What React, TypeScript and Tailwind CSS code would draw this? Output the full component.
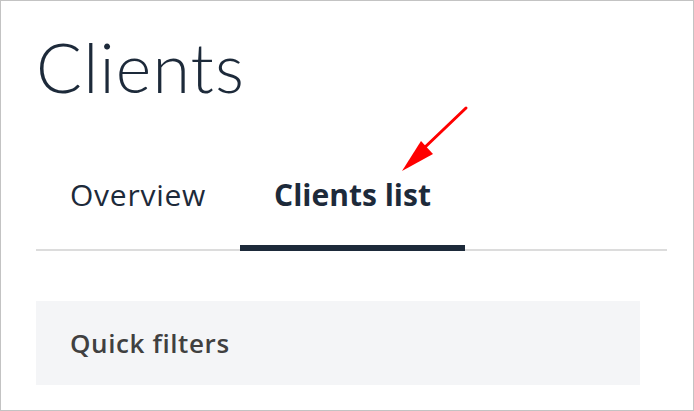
import React from "react";

const tabs = [
  { label: "Overview", active: false },
  { label: "Clients list", active: true },
];

const Arrow = () => (
  <svg
    className="absolute left-[396px] top-[100px]"
    width="76"
    height="76"
    viewBox="0 0 76 76"
    fill="none"
  >
    <line x1="69" y1="7" x2="25" y2="49" stroke="#ff0000" strokeWidth="3" strokeLinecap="round" />
    <polygon points="5,70 24,40 36,53" fill="#ff0000" />
  </svg>
);

export default function App() {
  return (
    <div className="relative w-[694px] h-[411px] overflow-hidden border border-[#c3c3c3] bg-white">
      <div className="pl-[35px] pr-[26px]">
        {/* Page title */}
        <h1 className="pt-[32px] font-['Lato',sans-serif] font-light text-[68px] leading-none text-[#1d2a3a] tracking-[1.2px]">
          Clients
        </h1>

        {/* Tabs */}
        <div className="mt-[79px] flex border-b-2 border-[#dcdcdc]">
          {tabs.map((tab) => (
            <div
              key={tab.label}
              className={
                tab.active
                  ? "relative px-[34px] pb-[39px] font-['Open_Sans',sans-serif] font-bold text-[30px] leading-none text-[#1d2a3a]"
                  : "relative px-[34px] pb-[39px] font-['Open_Sans',sans-serif] font-normal text-[30px] leading-none text-[#1d2a3a] tracking-[0.75px]"
              }
            >
              {tab.label}
              {tab.active && (
                <span className="absolute left-0 right-0 -bottom-[2px] h-[6px] bg-[#1d2a3a]" />
              )}
            </div>
          ))}
        </div>

        {/* Quick filters */}
        <div className="mt-[50px] w-[604px] h-[84px] bg-[#f4f5f7] px-[34px] flex items-center">
          <span className="font-['Open_Sans',sans-serif] font-semibold text-[26px] text-[#404040] tracking-[0.6px]">
            Quick filters
          </span>
        </div>
      </div>

      <Arrow />
    </div>
  );
}
